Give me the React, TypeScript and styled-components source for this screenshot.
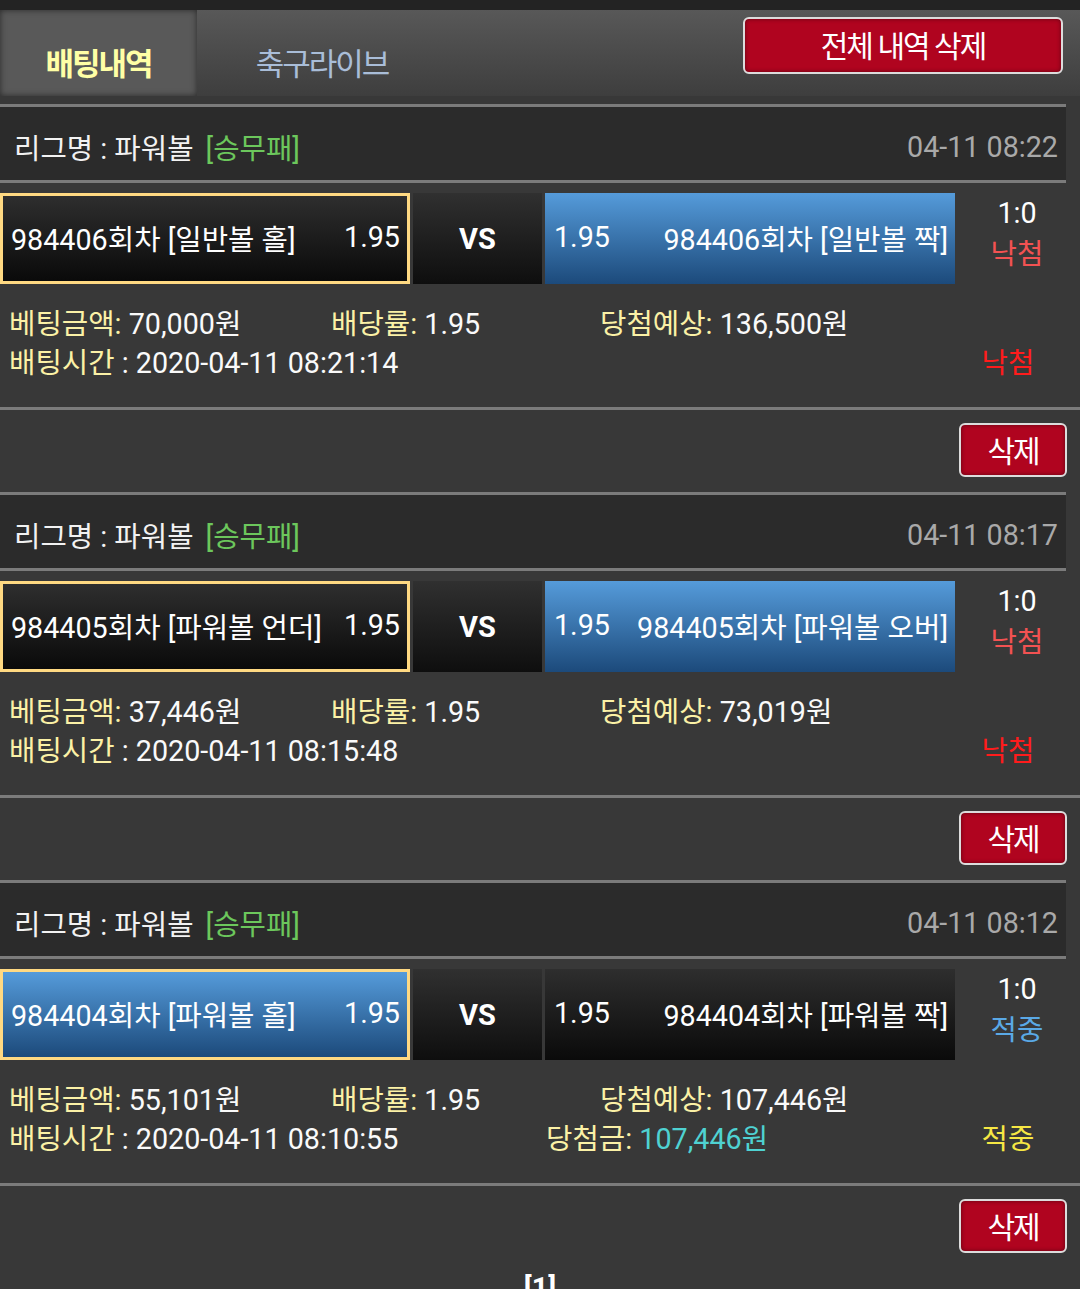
import React from "react";
import styled, { createGlobalStyle } from "styled-components";

const GlobalStyle = createGlobalStyle`
  body {
    margin: 0;
    background: #383838;
    font-family: Roboto, "Noto Sans CJK KR", sans-serif;
  }
`;

interface Side {
  name: string;
  odds: string;
}

interface Bet {
  id: string;
  date: string;
  home: Side;
  away: Side;
  pick: "home" | "away";
  score: string;
  won: boolean;
  amount: string;
  expected: string;
  time: string;
  prize?: string;
}

const bets: Bet[] = [
  {
    id: "984406",
    date: "04-11 08:22",
    home: { name: "984406회차 [일반볼 홀]", odds: "1.95" },
    away: { name: "984406회차 [일반볼 짝]", odds: "1.95" },
    pick: "away",
    score: "1:0",
    won: false,
    amount: "70,000원",
    expected: "136,500원",
    time: "2020-04-11 08:21:14",
  },
  {
    id: "984405",
    date: "04-11 08:17",
    home: { name: "984405회차 [파워볼 언더]", odds: "1.95" },
    away: { name: "984405회차 [파워볼 오버]", odds: "1.95" },
    pick: "away",
    score: "1:0",
    won: false,
    amount: "37,446원",
    expected: "73,019원",
    time: "2020-04-11 08:15:48",
  },
  {
    id: "984404",
    date: "04-11 08:12",
    home: { name: "984404회차 [파워볼 홀]", odds: "1.95" },
    away: { name: "984404회차 [파워볼 짝]", odds: "1.95" },
    pick: "home",
    score: "1:0",
    won: true,
    amount: "55,101원",
    expected: "107,446원",
    time: "2020-04-11 08:10:55",
    prize: "107,446원",
  },
];

const Page = styled.div`
  border-top: 10px solid #232323;
  color: #fff;
`;

const TabBar = styled.div`
  display: flex;
  height: 86px;
  background: linear-gradient(#585858, #3e3e3e);
`;

const Tab = styled.div<{ $active?: boolean }>`
  display: flex;
  align-items: flex-end;
  justify-content: center;
  width: ${(p) => (p.$active ? "197px" : "250px")};
  padding-bottom: 12px;
  box-sizing: border-box;
  font-size: 31px;
  letter-spacing: -2px;
  font-weight: ${(p) => (p.$active ? 700 : 400)};
  color: ${(p) => (p.$active ? "#ffffa6" : "#a9bdd8")};
  background: ${(p) => (p.$active ? "#595959" : "transparent")};
  box-shadow: ${(p) =>
    p.$active ? "inset 0 0 6px rgba(0, 0, 0, 0.55)" : "none"};
`;

const RedButton = styled.button<{ $wide?: boolean }>`
  display: flex;
  align-items: center;
  justify-content: center;
  width: ${(p) => (p.$wide ? "320px" : "108px")};
  height: ${(p) => (p.$wide ? "57px" : "54px")};
  padding: 0 0 3px;
  border: 2px solid #dcdcdc;
  border-radius: 6px;
  background: #b0041f;
  box-shadow: inset 0 0 4px rgba(0, 0, 0, 0.45);
  color: #fff;
  font-family: Roboto, "Noto Sans CJK KR", sans-serif;
  font-size: 30px;
  letter-spacing: -2px;
  cursor: pointer;
`;

const ClearAll = styled.div`
  margin: 7px 17px 0 auto;
`;

const Card = styled.section`
  margin-top: 8px;

  & + & {
    margin-top: 0;
  }
`;

const CardHeader = styled.div`
  display: flex;
  align-items: center;
  justify-content: space-between;
  width: 1066px;
  height: 79px;
  padding: 0 8px 0 14px;
  box-sizing: border-box;
  border-top: 3px solid #7b7b7b;
  border-bottom: 3px solid #7b7b7b;
  background: #2b2b2b;
  font-size: 28.7px;
`;

const League = styled.div`
  padding-top: 6px;
  color: #f2f2f2;
`;

const Market = styled.span`
  margin-left: 12px;
  color: #6cc75c;
`;

const HeaderDate = styled.div`
  padding-top: 6px;
  color: #a9a9a9;
`;

const MatchRow = styled.div`
  display: flex;
  gap: 3px;
  height: 91px;
  margin-top: 10px;
`;

const Pick = styled.div<{ $selected: boolean; $bordered?: boolean; $reverse?: boolean }>`
  display: flex;
  align-items: center;
  justify-content: space-between;
  flex-direction: ${(p) => (p.$reverse ? "row-reverse" : "row")};
  width: 410px;
  padding: ${(p) => (p.$reverse ? "0 7px 3px 9px" : "0 7px 3px 8px")};
  box-sizing: border-box;
  border: ${(p) => (p.$bordered ? "3px solid #ffd982" : "none")};
  background: ${(p) =>
    p.$selected
      ? "linear-gradient(#559bda, #1c4a7b)"
      : "linear-gradient(#2e2e2e, #0a0a0a)"};
  font-size: 28.7px;
  color: #fff;
`;

const Versus = styled.div`
  display: flex;
  align-items: center;
  justify-content: center;
  width: 129px;
  background: linear-gradient(#303030, #0e0e0e);
  font-size: 29px;
  font-weight: 700;
  padding-top: 1px;
  box-sizing: border-box;
`;

const ScoreCell = styled.div`
  display: flex;
  flex-direction: column;
  align-items: center;
  justify-content: center;
  flex: 1;
  font-size: 28.7px;
  line-height: 41px;
  padding: 0 4px 9px 0;
`;

const ScoreStatus = styled.div<{ $won: boolean }>`
  color: ${(p) => (p.$won ? "#5aa9e6" : "#f25252")};
`;

const Details = styled.div`
  padding: 21px 0 24px 9px;
  border-bottom: 3px solid #7b7b7b;
  font-size: 28.7px;
`;

const DetailRow = styled.div<{ $cols: string }>`
  display: grid;
  grid-template-columns: ${(p) => p.$cols};
  height: 39px;
  line-height: 39px;
  white-space: nowrap;
`;

const Label = styled.span`
  color: #fbf1a6;
`;

const Value = styled.span<{ $accent?: boolean }>`
  color: ${(p) => (p.$accent ? "#4fd2d2" : "#fafafa")};
`;

const ResultStatus = styled.div<{ $won: boolean }>`
  text-align: center;
  color: ${(p) => (p.$won ? "#f6e744" : "#ff1c1c")};
`;

const ActionRow = styled.div`
  display: flex;
  justify-content: flex-end;
  padding: 13px 13px 15px;
`;

const Pagination = styled.div`
  padding-top: 3px;
  text-align: center;
  font-size: 28.7px;
  font-weight: 700;
  color: #fff;
`;

const BetCard: React.FC<{ bet: Bet }> = ({ bet }) => (
  <Card>
    <CardHeader>
      <League>
        리그명 : 파워볼<Market>[승무패]</Market>
      </League>
      <HeaderDate>{bet.date}</HeaderDate>
    </CardHeader>
    <MatchRow>
      <Pick $selected={bet.pick === "home"} $bordered>
        <span>{bet.home.name}</span>
        <span>{bet.home.odds}</span>
      </Pick>
      <Versus>VS</Versus>
      <Pick $selected={bet.pick === "away"} $reverse>
        <span>{bet.away.name}</span>
        <span>{bet.away.odds}</span>
      </Pick>
      <ScoreCell>
        <div>{bet.score}</div>
        <ScoreStatus $won={bet.won}>{bet.won ? "적중" : "낙첨"}</ScoreStatus>
      </ScoreCell>
    </MatchRow>
    <Details>
      <DetailRow $cols="322px 269px 1fr 144px">
        <div>
          <Label>베팅금액:</Label> <Value>{bet.amount}</Value>
        </div>
        <div>
          <Label>배당률:</Label> <Value>1.95</Value>
        </div>
        <div>
          <Label>당첨예상:</Label> <Value>{bet.expected}</Value>
        </div>
        <div />
      </DetailRow>
      <DetailRow $cols="537px 1fr 144px">
        <div>
          <Label>배팅시간</Label> <Value>: {bet.time}</Value>
        </div>
        <div>
          {bet.prize && (
            <>
              <Label>당첨금:</Label> <Value $accent>{bet.prize}</Value>
            </>
          )}
        </div>
        <ResultStatus $won={bet.won}>{bet.won ? "적중" : "낙첨"}</ResultStatus>
      </DetailRow>
    </Details>
    <ActionRow>
      <RedButton>삭제</RedButton>
    </ActionRow>
  </Card>
);

const App: React.FC = () => {
  return (
    <Page>
      <GlobalStyle />
      <TabBar>
        <Tab $active>배팅내역</Tab>
        <Tab>축구라이브</Tab>
        <ClearAll>
          <RedButton $wide>전체 내역 삭제</RedButton>
        </ClearAll>
      </TabBar>
      {bets.map((bet) => (
        <BetCard key={bet.id} bet={bet} />
      ))}
      <Pagination>[1]</Pagination>
    </Page>
  );
};

export default App;
